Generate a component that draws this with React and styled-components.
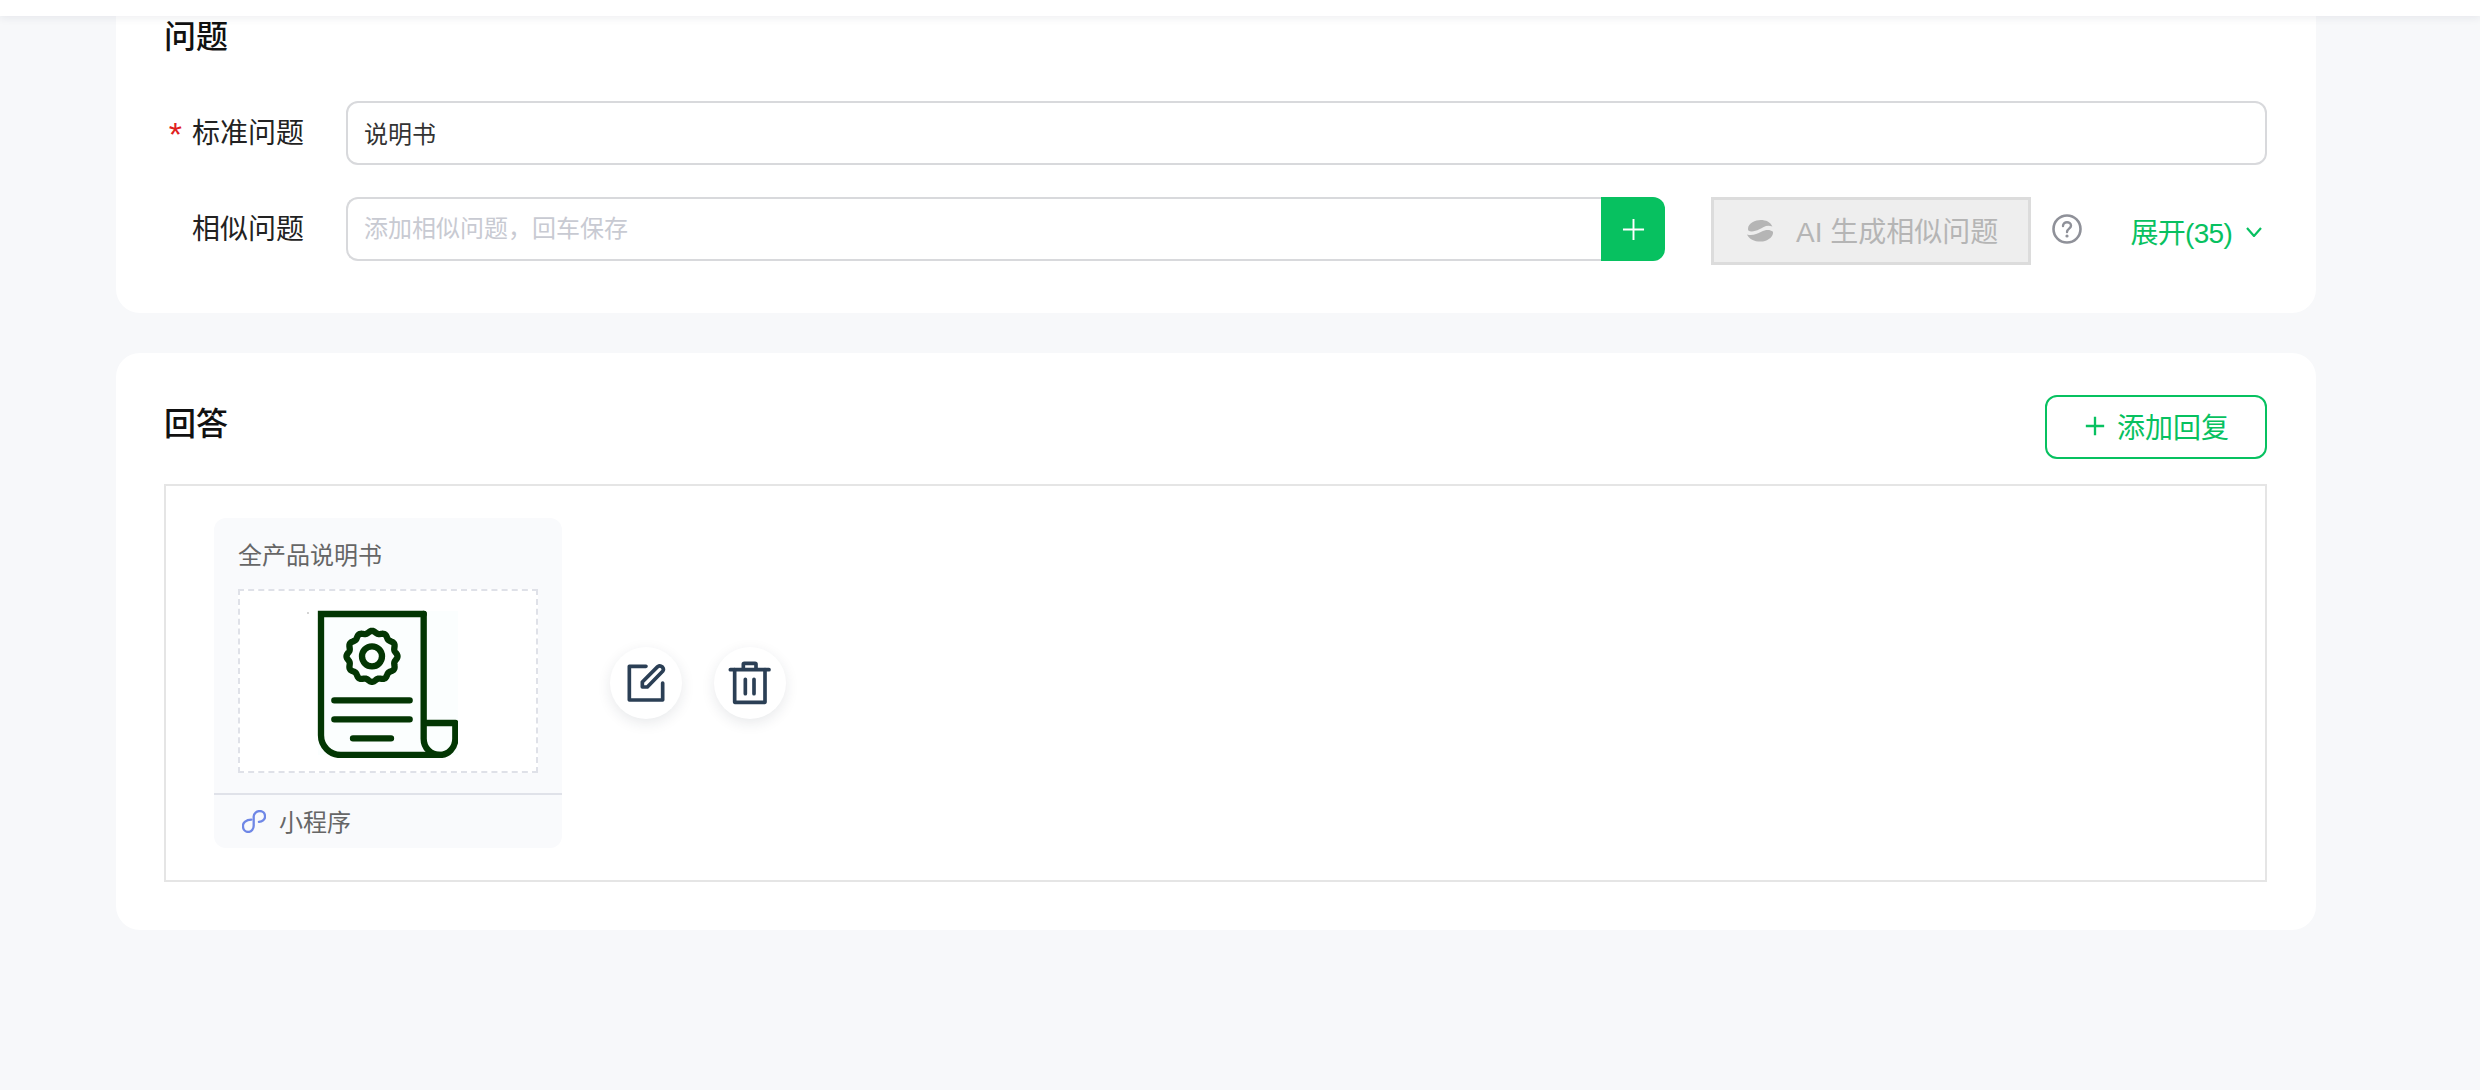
import React from "react";
import styled, { createGlobalStyle } from "styled-components";

const GREEN = "#07c160";
const FONT = `"Liberation Sans", "Noto Sans CJK SC", sans-serif`;

const Global = createGlobalStyle`
  html, body { margin: 0; padding: 0; background: #f7f8fa; }
  body { font-family: ${FONT}; overflow: hidden; }
  * { box-sizing: border-box; }
`;

const Page = styled.div`
  width: 2480px;
  height: 1090px;
  background: #f7f8fa;
  display: flex;
  flex-direction: column;
`;
const TopBar = styled.header`
  height: 16px;
  flex: none;
  background: #fff;
  box-shadow: 0 2px 8px rgba(30, 40, 60, 0.08);
  position: relative;
  z-index: 2;
`;
const Main = styled.main`
  display: flex;
  flex-direction: column;
  gap: 40px;
  width: 2200px;
  margin-left: 116px;
`;
const QuestionCard = styled.section`
  height: 297px;
  background: #fff;
  border-radius: 0 0 24px 24px;
  padding: 0 49px 0 48px;
`;
const AnswerCard = styled.section`
  height: 577px;
  background: #fff;
  border-radius: 24px;
  padding: 42px 49px 0 48px;
`;
const Title = styled.h2`
  margin: 0;
  font-size: 32px;
  font-weight: 500;
  line-height: 40px;
  color: #111;
`;
const QuestionTitle = styled(Title)`
  padding-top: 1px;
  margin-bottom: 44px;
`;
const Row = styled.div`
  display: flex;
  align-items: flex-start;
  margin-bottom: 32px;
`;
const Label = styled.label`
  width: 182px;
  flex: none;
  padding: 2px 42px 0 0;
  display: flex;
  justify-content: flex-end;
  align-items: center;
  gap: 10px;
  font-size: 28px;
  line-height: 62px;
  color: #222;
`;
const Star = styled.span`
  color: #e02020;
  font-size: 34px;
  font-family: "Liberation Sans", sans-serif;
`;
const TextInput = styled.input`
  flex: 1;
  height: 64px;
  min-width: 0;
  border: 2px solid #d8d9dc;
  border-radius: ${(p) => (p.$joined ? "12px 0 0 12px" : "12px")};
  border-right-width: ${(p) => (p.$joined ? "0" : "2px")};
  padding: 0 16px 1px;
  outline: none;
  font-family: ${FONT};
  font-size: 24px;
  color: #333;
  background: #fff;
  &::placeholder { color: #c8cad2; opacity: 1; }
`;
const InputGroup = styled.div`
  width: 1319px;
  flex: none;
  display: flex;
`;
const AddButton = styled.button`
  width: 64px;
  height: 64px;
  flex: none;
  border: 0;
  padding: 0;
  border-radius: 0 12px 12px 0;
  background: ${GREEN};
  display: flex;
  align-items: center;
  justify-content: center;
`;
const AiButton = styled.button`
  width: 320px;
  height: 68px;
  flex: none;
  margin-left: 46px;
  border: 3px solid #dcdcdc;
  background: #eeeeee;
  color: #b5b5b5;
  font-family: ${FONT};
  font-size: 28px;
  display: flex;
  align-items: center;
  padding: 0 0 2px 33px;
  gap: 23px;
`;
const HelpIcon = styled.svg`
  width: 30px;
  height: 30px;
  flex: none;
  margin: 17px 0 0 21px;
`;
const Expand = styled.button`
  margin-left: auto;
  height: 68px;
  border: 0;
  background: none;
  padding: 0 5px 0 0;
  display: flex;
  align-items: center;
  gap: 14px;
  color: ${GREEN};
  font-family: ${FONT};
  font-size: 28px;
  letter-spacing: -0.7px;
`;
const Chevron = styled.svg`
  margin-top: 2px;
`;
const Header = styled.div`
  display: flex;
  justify-content: space-between;
  align-items: flex-start;
  margin-bottom: 25px;
`;
const AnswerTitle = styled(Title)`
  margin-top: 9px;
`;
const OutlineButton = styled.button`
  width: 222px;
  height: 64px;
  border: 2px solid ${GREEN};
  border-radius: 12px;
  background: #fff;
  color: ${GREEN};
  font-family: ${FONT};
  font-size: 28px;
  display: flex;
  align-items: center;
  justify-content: center;
  gap: 12px;
  padding: 0 0 2px 2px;
`;
const Box = styled.div`
  border: 2px solid #e5e5e5;
  padding: 32px 48px;
  display: flex;
  align-items: center;
  gap: 48px;
`;
const Item = styled.article`
  width: 348px;
  height: 330px;
  border-radius: 12px;
  background: #f9fafc;
  display: flex;
  flex-direction: column;
`;
const ItemTitle = styled.div`
  height: 71px;
  padding: 18px 0 0 24px;
  font-size: 24px;
  line-height: 40px;
  color: #666;
`;
const Preview = styled.div`
  width: 300px;
  height: 184px;
  margin-left: 24px;
  border: 2px dashed #dfe1e8;
  background: #fff;
  padding: 19px 0 0 58px;
`;
const Footer = styled.div`
  margin-top: 20px;
  flex: 1;
  border-top: 2px solid #e0e2e9;
  display: flex;
  align-items: center;
  gap: 13px;
  padding: 0 0 3px 28px;
  font-size: 24px;
  color: #666;
`;
const LinkSvg = styled.svg`
  margin-top: 3px;
  flex: none;
`;
const Actions = styled.div`
  display: flex;
  gap: 32px;
`;
const RoundButton = styled.button`
  width: 72px;
  height: 72px;
  border: 0;
  padding: 0;
  border-radius: 50%;
  background: #fff;
  box-shadow: 0 4px 14px rgba(30, 40, 60, 0.1);
  display: block;
`;
const DocSvg = styled.svg`
  display: block;
`;

function sealPath() {
  const pts = [];
  for (let i = 0; i < 240; i++) {
    const t = (i / 240) * Math.PI * 2;
    const r = 73 + 3.5 * Math.cos(12 * t);
    pts.push(`${(517 + r * Math.sin(t)).toFixed(1)} ${(198 - r * Math.cos(t)).toFixed(1)}`);
  }
  return `M${pts.join("L")}Z`;
}

const DocIcon = () => (
  <DocSvg width="160" height="148" viewBox="295 59 480 444">
    <rect x="355" y="62" width="420" height="432" fill="#fbfefe" />
    <circle cx="325" cy="68" r="2" fill="#888" />
    <g fill="none" stroke="#033603" strokeWidth="19" strokeLinejoin="round" strokeLinecap="round">
      <path d="M672 398H767V445a47 49 0 0 1 -47 49a48 49 0 0 1 -48 -49V71" />
      <path d="M672 71H364V435a59 59 0 0 0 59 59H720" strokeLinejoin="miter" />
      <path d={sealPath()} />
      <circle cx="517" cy="198" r="30" />
      <path d="M404 330H630M404 387H630M460 444H574" />
    </g>
  </DocSvg>
);

const EditIcon = () => (
  <svg width="72" height="72" viewBox="0 0 216 216" fill="none" stroke="#2b3f55" strokeWidth="11" strokeLinecap="round" strokeLinejoin="round">
    <path d="M108 58H58V159H158V108" />
    <path d="M97 120V105L143 59Q150 54 157 60Q163 67 158 73L112 120Z" />
  </svg>
);

const TrashIcon = () => (
  <svg width="72" height="72" viewBox="0 0 216 216" fill="none" stroke="#2b3f55" strokeWidth="11" strokeLinecap="round" strokeLinejoin="round">
    <path d="M49 68H165" />
    <path d="M88 66V52Q88 49 91 49H123Q126 49 126 52V66" />
    <path d="M62 68V166H153V68" />
    <path d="M94 97V140M120 97V140" />
  </svg>
);

const Plus = ({ size, width, color }) => (
  <svg width={size} height={size} viewBox="0 0 24 24" fill="none" stroke={color} strokeWidth={width}>
    <path d="M12 1V23M1 12H23" />
  </svg>
);

const AiIcon = () => (
  <svg width="26" height="23" viewBox="0 0 80 68" fill="#b5b5b5">
    <path d="M4 34C-2 14 25 2 42 2C58 2 72 8 78 22C62 14 50 24 38 30C26 36 12 40 4 34Z" />
    <path d="M0 46C16 52 30 44 44 38C56 32 70 30 80 38C82 54 62 68 42 68C22 68 6 60 0 46Z" />
  </svg>
);

const LinkIcon = () => (
  <LinkSvg width="24" height="23" viewBox="17 19 78 74" fill="none" stroke="#6f87e6" strokeWidth="7.5" strokeLinecap="round">
    <path d="M47 50C30 50 20 60 20 70C20 82 28 90 37 90C48 90 55 80 55 70V40C55 30 65 22 75 22C85 22 92 30 92 40C92 50 82 56 72 57" />
  </LinkSvg>
);

export default function App() {
  return (
    <Page>
      <Global />
      <TopBar />
      <Main>
        <QuestionCard>
          <QuestionTitle>问题</QuestionTitle>
          <Row>
            <Label>
              <Star>*</Star>
              标准问题
            </Label>
            <TextInput defaultValue="说明书" />
          </Row>
          <Row>
            <Label>相似问题</Label>
            <InputGroup>
              <TextInput $joined placeholder="添加相似问题，回车保存" />
              <AddButton aria-label="添加">
                <Plus size={23} width={2} color="#fff" />
              </AddButton>
            </InputGroup>
            <AiButton disabled>
              <AiIcon />
              AI 生成相似问题
            </AiButton>
            <HelpIcon viewBox="0 0 30 30" fill="none">
              <circle cx="15" cy="15" r="13.5" stroke="#8f9199" strokeWidth="2.6" />
              <path d="M11 12C11 9.5 13 8.2 15 8.2C17.2 8.2 19 9.7 19 11.8C19 14.6 15 14.8 15 18" stroke="#8f9199" strokeWidth="2.4" strokeLinecap="round" />
              <circle cx="15" cy="22" r="1.6" fill="#8f9199" />
            </HelpIcon>
            <Expand>
              展开(35)
              <Chevron width="16" height="10" viewBox="0 0 16 10" fill="none" stroke={GREEN} strokeWidth="2.2">
                <path d="M1 1L8 9L15 1" />
              </Chevron>
            </Expand>
          </Row>
        </QuestionCard>
        <AnswerCard>
          <Header>
            <AnswerTitle>回答</AnswerTitle>
            <OutlineButton>
              <Plus size={20} width={2.8} color={GREEN} />
              添加回复
            </OutlineButton>
          </Header>
          <Box>
            <Item>
              <ItemTitle>全产品说明书</ItemTitle>
              <Preview>
                <DocIcon />
              </Preview>
              <Footer>
                <LinkIcon />
                小程序
              </Footer>
            </Item>
            <Actions>
              <RoundButton aria-label="编辑"><EditIcon /></RoundButton>
              <RoundButton aria-label="删除"><TrashIcon /></RoundButton>
            </Actions>
          </Box>
        </AnswerCard>
      </Main>
    </Page>
  );
}
